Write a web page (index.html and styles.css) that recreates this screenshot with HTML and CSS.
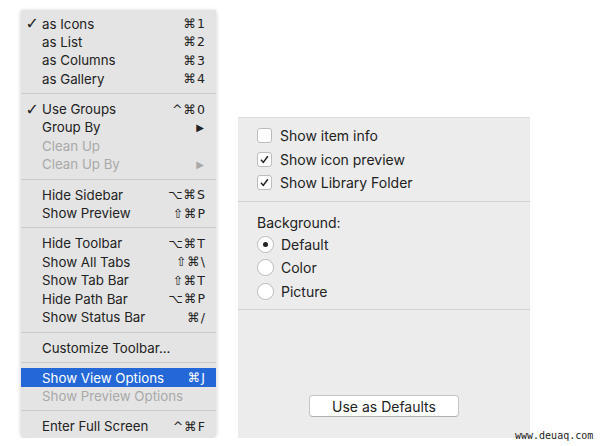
FILE: index.html
```html
<!DOCTYPE html>
<html lang="en">
	<head>
		<meta charset="utf-8">
		<title>Finder View Menu</title>
		<link rel="stylesheet" href="styles.css">
	</head>
	<body>
		<div class="stage">
			<div class="menu">
				<div class="item"><span class="check">✓</span><span class="label">as Icons</span><span class="key">⌘1</span></div>
				<div class="item"><span class="check"></span><span class="label">as List</span><span class="key">⌘2</span></div>
				<div class="item"><span class="check"></span><span class="label">as Columns</span><span class="key">⌘3</span></div>
				<div class="item"><span class="check"></span><span class="label">as Gallery</span><span class="key">⌘4</span></div>
				<div class="sep"></div>
				<div class="item"><span class="check">✓</span><span class="label">Use Groups</span><span class="key">^⌘0</span></div>
				<div class="item"><span class="check"></span><span class="label">Group By</span><span class="key arrow">▶</span></div>
				<div class="item off"><span class="check"></span><span class="label">Clean Up</span><span class="key"></span></div>
				<div class="item off"><span class="check"></span><span class="label">Clean Up By</span><span class="key arrow">▶</span></div>
				<div class="sep"></div>
				<div class="item"><span class="check"></span><span class="label">Hide Sidebar</span><span class="key">⌥⌘S</span></div>
				<div class="item"><span class="check"></span><span class="label">Show Preview</span><span class="key">⇧⌘P</span></div>
				<div class="sep"></div>
				<div class="item"><span class="check"></span><span class="label">Hide Toolbar</span><span class="key">⌥⌘T</span></div>
				<div class="item"><span class="check"></span><span class="label">Show All Tabs</span><span class="key">⇧⌘\</span></div>
				<div class="item"><span class="check"></span><span class="label">Show Tab Bar</span><span class="key">⇧⌘T</span></div>
				<div class="item"><span class="check"></span><span class="label">Hide Path Bar</span><span class="key">⌥⌘P</span></div>
				<div class="item"><span class="check"></span><span class="label">Show Status Bar</span><span class="key">⌘/</span></div>
				<div class="sep"></div>
				<div class="item"><span class="check"></span><span class="label">Customize Toolbar...</span><span class="key"></span></div>
				<div class="sep"></div>
				<div class="item active"><span class="check"></span><span class="label">Show View Options</span><span class="key">⌘J</span></div>
				<div class="item off"><span class="check"></span><span class="label">Show Preview Options</span><span class="key"></span></div>
				<div class="sep"></div>
				<div class="item"><span class="check"></span><span class="label">Enter Full Screen</span><span class="key">^⌘F</span></div>
			</div>

			<div class="panel">
				<div class="section">
					<div class="row"><span class="box"></span>Show item info</div>
					<div class="row"><span class="box"><svg viewBox="0 0 15 15" width="15" height="15"><path d="M4 7.8 L6.3 10.4 L10.8 4.2" fill="none" stroke="#222" stroke-width="1.5"/></svg></span>Show icon preview</div>
					<div class="row"><span class="box"><svg viewBox="0 0 15 15" width="15" height="15"><path d="M4 7.8 L6.3 10.4 L10.8 4.2" fill="none" stroke="#222" stroke-width="1.5"/></svg></span>Show Library Folder</div>
				</div>
				<div class="section">
					<div class="caption">Background:</div>
					<div class="row"><span class="radio on"></span>Default</div>
					<div class="row"><span class="radio"></span>Color</div>
					<div class="row"><span class="radio"></span>Picture</div>
				</div>
				<div class="footer">
					<button class="btn">Use as Defaults</button>
				</div>
			</div>
		</div>
		<div class="mark">www.deuaq.com</div>
	</body>
</html>
```

FILE: styles.css
```css
body { margin: 0; background: #fff; font-family: Inter, "Liberation Sans", sans-serif; color: #222; }

.stage { display: flex; align-items: flex-start; padding: 10px 0 0 21px; }

/* menu */
.menu { width: 195px; height: 428px; box-sizing: border-box; padding: 4px 0; background: #e4e4e4; border-radius: 0 0 6px 6px; box-shadow: 0 1px 4px rgba(0, 0, 0, 0.22); font-size: 13.3px; }

.item { display: grid; grid-template-columns: 21px 1fr auto; align-items: center; height: 18.5px; padding-right: 10px; }

.check { font-size: 16px; font-weight: 600; text-align: right; padding-right: 3px; font-family: "DejaVu Sans", sans-serif; }

.key { letter-spacing: 1px; font-family: "DejaVu Sans", sans-serif; font-size: 12.5px; }

.key.arrow { font-size: 10px; padding-right: 1px; }

.off { color: #a9a9a9; }

.active { background: #2468d8; color: #fff; }

.sep { height: 1px; margin: 5px 0 5.7px; background: #cbcbcb; }

/* view options panel */
.panel { margin: 107px 0 0 22px; width: 292px; height: 321px; background: #ececec; border-top: 1px solid #dcdcdc; box-sizing: border-box; font-size: 14px; display: flex; flex-direction: column; }

.section { padding: 6px 19px 6px; border-bottom: 1px solid #d2d2d2; }

.section + .section { padding-top: 11px; padding-bottom: 6px; }

.row { display: flex; align-items: center; height: 23.5px; }

.caption { height: 20px; display: flex; align-items: center; }

.box { width: 15px; height: 15px; box-sizing: border-box; margin-right: 8px; background: #fff; border: 1px solid #bcbcbc; border-radius: 3px; position: relative; }

.box svg { position: absolute; left: -1px; top: -1px; }

.radio { width: 17px; height: 17px; box-sizing: border-box; margin-right: 7px; background: #fff; border: 1px solid #bcbcbc; border-radius: 50%; display: flex; align-items: center; justify-content: center; }

.radio.on::after { content: ""; width: 5px; height: 5px; border-radius: 50%; background: #222; }

.footer { flex: 1; display: flex; align-items: flex-end; justify-content: center; padding-bottom: 21px; }

.btn { width: 150px; height: 22px; background: #fff; border: 1px solid #c6c6c6; border-bottom-color: #b0b0b0; border-radius: 4px; font: 14px Inter, "Liberation Sans", sans-serif; color: #222; padding: 0; }

.mark { position: absolute; left: 515px; top: 430px; font: 10px "DejaVu Sans Mono", monospace; color: #222; }
```
